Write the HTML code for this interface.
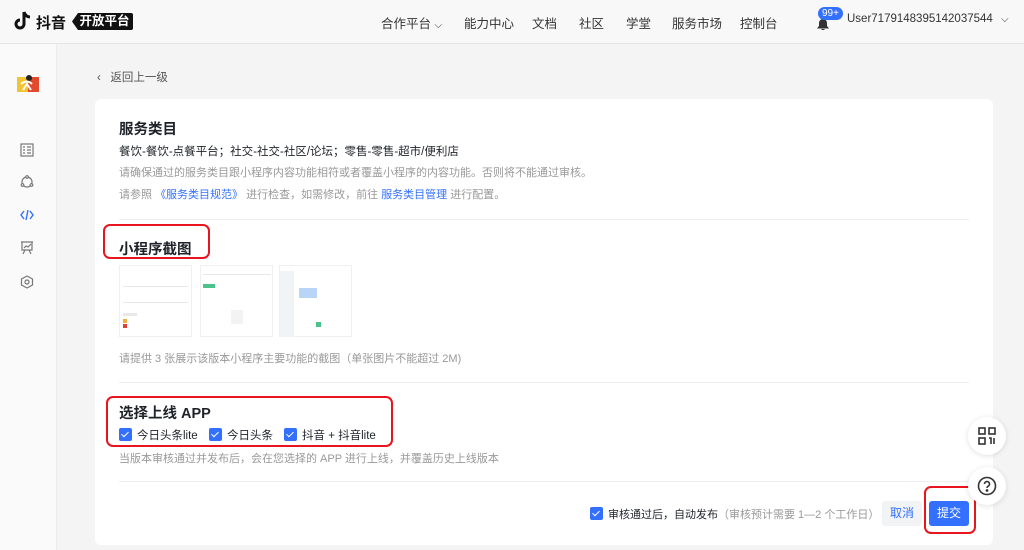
<!DOCTYPE html>
<html><head><meta charset="utf-8"><style>
*{margin:0;padding:0;box-sizing:border-box}
body{width:1024px;height:550px;overflow:hidden;background:#f4f4f5;font-family:"Liberation Sans","Noto Sans CJK SC",sans-serif;color:#1f2329;position:relative}
.hdr{position:absolute;left:0;top:0;width:1024px;height:44px;background:#f8f8f8;border-bottom:1px solid #e6e6e6}
.side{position:absolute;left:0;top:44px;width:57px;height:506px;background:#fafafa;border-right:1px solid #ececec}
.nav{position:absolute;top:13px;font-size:12.5px;color:#333;white-space:nowrap}
.card{position:absolute;left:95px;top:99px;width:898px;height:446px;background:#fff;border-radius:6px}
.t{position:absolute;font-size:11.5px;white-space:nowrap}
.g{color:#999;font-size:11px}
.b{color:#3370ff}
.h{font-size:14.5px;font-weight:bold;color:#1f2329}
.cb{display:inline-block;width:13px;height:13px;background:#3370ff;border-radius:2px;position:absolute;left:0;top:1px}
.cb:after{content:"";position:absolute;left:4px;top:1.5px;width:3px;height:6px;border:solid #fff;border-width:0 1.6px 1.6px 0;transform:rotate(45deg)}
.red{position:absolute;border:2px solid #e8141e;border-radius:7px}
.line{position:absolute;height:1px;background:#eceef0}
.shot{position:absolute;top:265px;height:72px;background:#fff;border:1px solid #f0f0f0}
.fb{position:absolute;width:38px;height:38px;border-radius:50%;background:#fff;box-shadow:0 1px 6px rgba(0,0,0,.12)}
.s{position:absolute;background:#e8e8e8}
</style></head><body>
<div class="hdr">
 <svg style="position:absolute;left:14px;top:11px" width="18" height="20" viewBox="0 0 18 20"><path d="M10 1v12a4 4 0 1 1-4-4" fill="none" stroke="#111" stroke-width="3"/><path d="M10 1c1 3 3 5 6 5" fill="none" stroke="#111" stroke-width="3"/></svg>
 <div style="position:absolute;left:36px;top:12px;font-size:15px;font-weight:bold;color:#111">抖音</div>
 <div style="position:absolute;left:72px;top:13px;height:17px;width:61px;background:#111;color:#fff;font-size:12.5px;font-weight:bold;line-height:17px;text-align:center;padding-left:4px;border-radius:2px;clip-path:polygon(6px 0,100% 0,100% 100%,6px 100%,0 50%)">开放平台</div>
 <div class="nav" style="left:381px">合作平台 <span style="font-size:10px">⌵</span></div>
 <div class="nav" style="left:464px">能力中心</div>
 <div class="nav" style="left:532px">文档</div>
 <div class="nav" style="left:579px">社区</div>
 <div class="nav" style="left:626px">学堂</div>
 <div class="nav" style="left:672px">服务市场</div>
 <div class="nav" style="left:740px">控制台</div>
 <svg style="position:absolute;left:815px;top:16px" width="16" height="16" viewBox="0 0 16 16"><path d="M3 12h10l-1.5-2V7a3.5 3.5 0 0 0-7 0v3z M6.5 13.5h3" fill="#333" stroke="#333"/></svg>
 <div style="position:absolute;left:818px;top:7px;height:13px;padding:0 4px;background:#3370ff;color:#fff;font-size:10px;line-height:13px;border-radius:7px">99+</div>
 <div class="nav" style="left:847px;font-size:11.5px">User7179148395142037544</div>
 <div class="nav" style="left:1001px;font-size:10px;top:14px">⌵</div>
</div>
<div class="side">
 <svg style="position:absolute;left:16px;top:30px" width="24" height="20" viewBox="0 0 24 20"><rect x="1" y="3" width="22" height="15" fill="#f2c434"/><rect x="12" y="3" width="11" height="15" fill="#e3492d"/><circle cx="13" cy="4" r="3" fill="#222"/><path d="M5 10q6-5 11 0M7 16l4-6 4 6" stroke="#fff" stroke-width="2" fill="none"/></svg>
 <svg style="position:absolute;left:20px;top:99px" width="14" height="14" viewBox="0 0 14 14" fill="none" stroke="#777" stroke-width="1.2"><rect x="1" y="1" width="12" height="12"/><path d="M3 4h2M7 4h4M3 7h2M7 7h4M3 10h2M7 10h4"/></svg>
 <svg style="position:absolute;left:20px;top:131px" width="14" height="14" viewBox="0 0 14 14" fill="none" stroke="#777" stroke-width="1.2"><circle cx="7" cy="7" r="5"/><circle cx="7" cy="2" r="1.3" fill="#fff"/><circle cx="2.5" cy="10" r="1.3" fill="#fff"/><circle cx="11.5" cy="10" r="1.3" fill="#fff"/></svg>
 <svg style="position:absolute;left:20px;top:164px" width="14" height="14" viewBox="0 0 14 14" fill="none" stroke="#3370ff" stroke-width="1.4"><path d="M4 3L1 7l3 4M10 3l3 4-3 4M8 2L6 12"/></svg>
 <svg style="position:absolute;left:20px;top:197px" width="14" height="14" viewBox="0 0 14 14" fill="none" stroke="#777" stroke-width="1.2"><path d="M1 1h12M2 1v8h10V1M4 7l2-2 2 1 3-3M5 9l-2 4M9 9l2 4"/></svg>
 <svg style="position:absolute;left:20px;top:231px" width="14" height="14" viewBox="0 0 14 14" fill="none" stroke="#777" stroke-width="1.2"><path d="M7 1l5.5 3v6L7 13 1.5 10V4z"/><circle cx="7" cy="7" r="2"/></svg>
</div>
<div class="t" style="left:97px;top:69px;color:#555">‹&nbsp;&nbsp;&nbsp;返回上一级</div>
<div class="card"></div>
<div class="t h" style="left:119px;top:118px">服务类目</div>
<div class="t" style="left:119px;top:143px">餐饮-餐饮-点餐平台；社交-社交-社区/论坛；零售-零售-超市/便利店</div>
<div class="t g" style="left:119px;top:164px">请确保通过的服务类目跟小程序内容功能相符或者覆盖小程序的内容功能。否则将不能通过审核。</div>
<div class="t g" style="left:119px;top:186px">请参照 <span class="b">《服务类目规范》</span> 进行检查，如需修改，前往 <span class="b">服务类目管理</span> 进行配置。</div>
<div class="line" style="left:119px;top:219px;width:850px"></div>
<div class="t h" style="left:119px;top:238px">小程序截图</div>
<div class="red" style="left:103px;top:224px;width:107px;height:35px"></div>
<div class="shot" style="left:119px;width:73px"><div class="s" style="left:3px;top:20px;width:65px;height:1px"></div><div class="s" style="left:3px;top:36px;width:65px;height:1px"></div><div class="s" style="left:3px;top:47px;width:14px;height:3px"></div><div class="s" style="left:3px;top:53px;width:4px;height:4px;background:#f0b040"></div><div class="s" style="left:3px;top:58px;width:4px;height:4px;background:#e04040"></div></div>
<div class="shot" style="left:200px;width:73px"><div class="s" style="left:2px;top:18px;width:12px;height:4px;background:#4cc38a"></div><div class="s" style="left:2px;top:8px;width:68px;height:1px"></div><div class="s" style="left:30px;top:44px;width:12px;height:14px;background:#f3f3f3"></div></div>
<div class="shot" style="left:279px;width:73px"><div class="s" style="left:0;top:5px;width:14px;height:66px;background:#f2f3f5"></div><div class="s" style="left:19px;top:22px;width:18px;height:10px;background:#b8d4f6"></div><div class="s" style="left:36px;top:56px;width:5px;height:5px;background:#4cc38a"></div></div>
<div class="t g" style="left:119px;top:350px">请提供 3 张展示该版本小程序主要功能的截图（单张图片不能超过 2M)</div>
<div class="line" style="left:119px;top:382px;width:850px"></div>
<div class="t h" style="left:119px;top:402px">选择上线 APP</div>
<div class="t" style="left:119px;top:427px;width:280px;height:16px"><span class="cb"></span><span style="position:absolute;left:18px;top:0">今日头条lite</span><span class="cb" style="left:90px"></span><span style="position:absolute;left:108px;top:0">今日头条</span><span class="cb" style="left:165px"></span><span style="position:absolute;left:183px;top:0">抖音 + 抖音lite</span></div>
<div class="red" style="left:106px;top:396px;width:287px;height:51px"></div>
<div class="t g" style="left:119px;top:450px">当版本审核通过并发布后，会在您选择的 APP 进行上线，并覆盖历史上线版本</div>
<div class="line" style="left:119px;top:481px;width:850px"></div>
<div class="t" style="left:590px;top:506px;font-size:11px;width:290px;height:16px"><span class="cb"></span><span style="position:absolute;left:18px;top:0">审核通过后，自动发布<span class="g">（审核预计需要 1—2 个工作日）</span></span></div>
<div style="position:absolute;left:882px;top:501px;width:40px;height:25px;background:#f2f3f5;color:#3370ff;font-size:12px;line-height:25px;text-align:center;border-radius:3px">取消</div>
<div style="position:absolute;left:929px;top:501px;width:40px;height:25px;background:#3370ff;color:#fff;font-size:12px;line-height:25px;text-align:center;border-radius:3px">提交</div>
<div class="red" style="left:924px;top:486px;width:52px;height:48px"></div>
<div class="fb" style="left:968px;top:417px"><svg style="position:absolute;left:10px;top:10px" width="18" height="18" viewBox="0 0 18 18" fill="none" stroke="#333" stroke-width="1.6"><rect x="1" y="1" width="6" height="6"/><rect x="11" y="1" width="6" height="6"/><rect x="1" y="11" width="6" height="6"/><path d="M11 11h2v6M16 11v6"/></svg></div>
<div class="fb" style="left:968px;top:467px"><svg style="position:absolute;left:9px;top:9px" width="20" height="20" viewBox="0 0 20 20" fill="none" stroke="#333" stroke-width="1.6"><circle cx="10" cy="10" r="8.5"/><path d="M7.5 8a2.5 2.5 0 1 1 3.5 2.3c-.7.4-1 .9-1 1.7"/><circle cx="10" cy="14.5" r=".6" fill="#333"/></svg></div>
</body></html>
